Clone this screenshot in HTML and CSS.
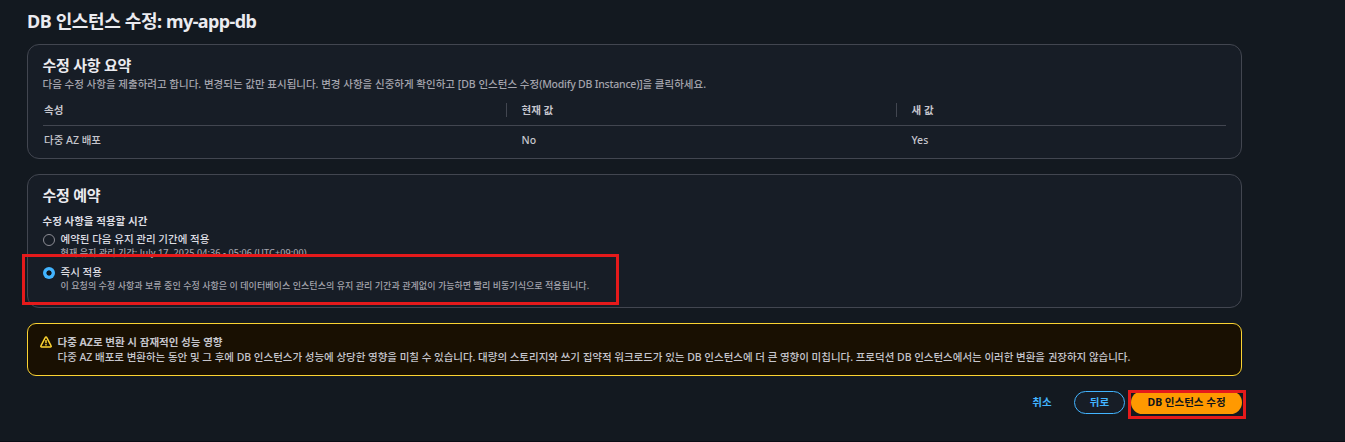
FILE: index.html
```html
<!DOCTYPE html>
<html lang="ko">
<head>
<meta charset="utf-8">
<title>DB 인스턴스 수정</title>
<link rel="stylesheet" href="styles.css">
</head>
<body>
<main class="page">
  <h1 class="page-title">DB 인스턴스 수정: <span class="db-name">my-app-db</span></h1>

  <section class="panel summary">
    <h2 class="panel-title">수정 사항 요약</h2>
    <p class="panel-desc">다음 수정 사항을 제출하려고 합니다. 변경되는 값만 표시됩니다. 변경 사항을 신중하게 확인하고 [DB 인스턴스 수정<span class="latin">(Modify DB Instance)]</span>을 클릭하세요.</p>
    <div class="table">
      <div class="row head"><div class="cell">속성</div><div class="cell">현재 값</div><div class="cell">새 값</div></div>
      <div class="row"><div class="cell">다중 AZ 배포</div><div class="cell">No</div><div class="cell">Yes</div></div>
    </div>
  </section>

  <section class="panel schedule">
    <h2 class="panel-title">수정 예약</h2>
    <p class="field-label">수정 사항을 적용할 시간</p>
    <div class="option">
      <span class="radio"></span>
      <div class="option-text">
        <p class="option-label">예약된 다음 유지 관리 기간에 적용</p>
        <p class="option-desc window">현재 유지 관리 기간: July 17, 2025 04:36 - 05:06 (UTC+09:00)</p>
      </div>
    </div>
    <div class="option">
      <span class="radio checked"></span>
      <div class="option-text">
        <p class="option-label">즉시 적용</p>
        <p class="option-desc">이 요청의 수정 사항과 보류 중인 수정 사항은 이 데이터베이스 인스턴스의 유지 관리 기간과 관계없이 가능하면 빨리 비동기식으로 적용됩니다.</p>
      </div>
    </div>
    <div class="marker marker-option"></div>
  </section>

  <section class="alert">
    <svg class="alert-icon" width="12" height="12" viewBox="0 0 16 16" fill="none" stroke="#fbd332" stroke-width="2" stroke-linejoin="round"><path d="M7.1 1.8a1 1 0 0 1 1.8 0l5.9 11.4a1 1 0 0 1-.9 1.5H2.1a1 1 0 0 1-.9-1.5L7.1 1.8Z"/><path d="M8 5.3v4.2M8 10.6v2"/></svg>
    <div class="alert-text">
      <p class="alert-title">다중 AZ로 변환 시 잠재적인 성능 영향</p>
      <p class="alert-body">다중 AZ 배포로 변환하는 동안 및 그 후에 DB 인스턴스가 성능에 상당한 영향을 미칠 수 있습니다. 대량의 스토리지와 쓰기 집약적 워크로드가 있는 DB 인스턴스에 더 큰 영향이 미칩니다. 프로덕션 DB 인스턴스에서는 이러한 변환을 권장하지 않습니다.</p>
    </div>
  </section>

  <div class="actions">
    <button class="btn link">취소</button>
    <button class="btn normal">뒤로</button>
    <div class="primary-wrap">
      <button class="btn primary">DB 인스턴스 수정</button>
      <div class="marker marker-button"></div>
    </div>
  </div>
</main>
</body>
</html>
```
FILE: styles.css
```css
* { box-sizing: border-box; }
body {
  margin: 0;
  height: 442px;
  overflow: hidden;
  background: #131920;
  border-bottom: 1px solid #0b0d15;
  color: #c6c6cd;
  font: 500 10.5px/15px "Noto Sans", "Noto Sans CJK KR", sans-serif;
}
h1, h2, p { margin: 0; white-space: nowrap; }
.page { width: 1215px; margin-left: 27px; padding-top: 9px; }
.page-title { height: 35px; font-size: 18px; line-height: 24px; color: #ebebf0; font-weight: 700; letter-spacing: -0.38px; }
.db-name { letter-spacing: -0.6px; }
.panel {
  position: relative;
  border: 1px solid #424650;
  border-radius: 12px;
  background: #171d26;
  padding: 11px 15px 0;
}
.summary { height: 115px; margin-bottom: 15px; }
.schedule { height: 134px; margin-bottom: 15px; }
.panel-title { font-size: 15px; line-height: 18px; height: 21px; color: #ebebf0; font-weight: 700; letter-spacing: -0.25px; margin-left: -0.5px; }
.panel-desc { color: #a4a4ad; height: 14px; margin-left: -0.5px; }
.latin { letter-spacing: -0.22px; }
.table { margin-top: 4px; }
.row { display: grid; grid-template-columns: 463px 390px 330px; height: 28px; align-items: center; }
.row.head { height: 31px; border-bottom: 1px solid #424650; font-weight: 700; }
.cell { padding-left: 1px; }
.cell + .cell { padding-left: 15.5px; }
.head .cell + .cell { border-left: 1px solid #424650; padding-left: 14.5px; height: 14px; line-height: 14px; }
.schedule .panel-title { height: 28px; }
.field-label { color: #dedee3; font-weight: 700; height: 18px; line-height: 15px; margin-left: -0.5px; }
.option { display: flex; gap: 6px; height: 33px; }
.radio { width: 12px; height: 12px; margin-top: 2px; border: 1px solid #8c8c94; border-radius: 50%; flex: none; }
.radio.checked { border: none; background: radial-gradient(circle, #0f141a 2.2px, #42b4ff 3px); }
.option-label { color: #dedee3; height: 15px; margin-left: -0.5px; }
.option-desc { color: #a4a4ad; font-size: 9px; line-height: 12px; letter-spacing: 0.05px; margin-left: -0.5px; }
.option-desc.window { letter-spacing: 0.1px; }
.marker { position: absolute; border: 3px solid #e51a1b; pointer-events: none; }
.marker-option { left: -6px; top: 79px; width: 597px; height: 51px; }
.alert {
  display: flex;
  gap: 5.5px;
  height: 53px;
  padding: 11px 12px 0;
  border: 1px solid #fbd332;
  border-radius: 9px;
  background: #191002;
}
.alert-icon { flex: none; margin-top: 1px; }
.alert-title { font-weight: 700; }
.alert-body { letter-spacing: -0.02px; }
.actions { display: flex; justify-content: flex-end; margin-top: 15px; }
.btn {
  height: 23px;
  padding: 0;
  border: 1px solid transparent;
  border-radius: 12px;
  background: transparent;
  color: #42b4ff;
  font: 700 10.5px/15px "Noto Sans", "Noto Sans CJK KR", sans-serif;
  white-space: nowrap;
}
.link { width: 52px; margin-right: 6px; }
.normal { width: 51px; margin-right: 6px; border-color: #42b4ff; background: #171d26; }
.primary-wrap { position: relative; }
.primary { width: 111px; background: #ff9900; color: #0f141a; display: block; }
.marker-button { left: -3px; top: -1px; width: 118px; height: 29px; }
```
